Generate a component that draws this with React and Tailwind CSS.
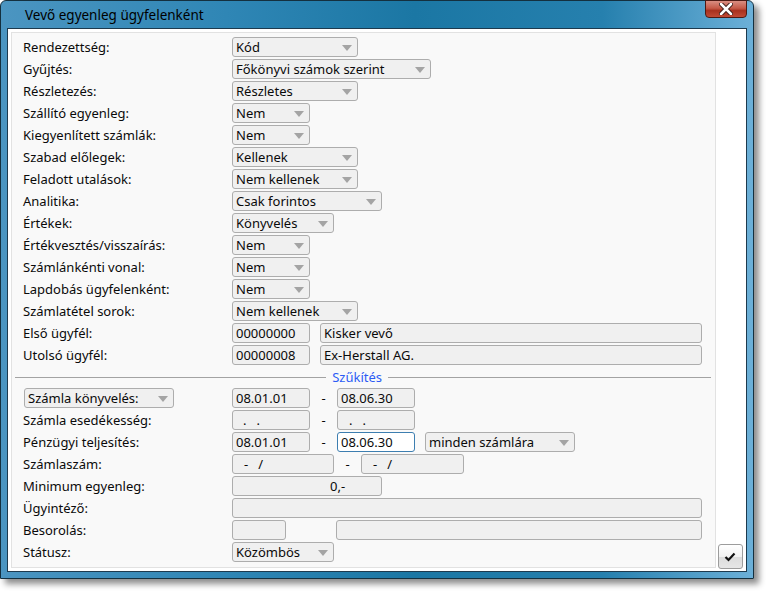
import React from 'react';

const upperRows = [
  ['Rendezettség:', 'Kód', 126],
  ['Gyűjtés:', 'Főkönyvi számok szerint', 199],
  ['Részletezés:', 'Részletes', 126],
  ['Szállító egyenleg:', 'Nem', 78],
  ['Kiegyenlített számlák:', 'Nem', 78],
  ['Szabad előlegek:', 'Kellenek', 126],
  ['Feladott utalások:', 'Nem kellenek', 126],
  ['Analitika:', 'Csak forintos', 150],
  ['Értékek:', 'Könyvelés', 102],
  ['Értékvesztés/visszaírás:', 'Nem', 78],
  ['Számlánkénti vonal:', 'Nem', 78],
  ['Lapdobás ügyfelenként:', 'Nem', 78],
  ['Számlatétel sorok:', 'Nem kellenek', 126],
];

const Arrow = () => (
  <svg width="10" height="6" viewBox="0 0 10 6" className="ml-auto mr-[5px] mt-[2px] shrink-0">
    <path d="M0 0 H10 L5 6 Z" fill="#a4a4a4" />
  </svg>
);

const Box = ({ w, children, arrow, focused, className = '' }) => (
  <div
    style={{ width: w }}
    className={`h-[20px] shrink-0 flex items-center rounded-[3px] border pl-[3px] whitespace-pre ${
      focused ? 'bg-white border-[#3d7eb0]' : 'bg-[#f0f0f0] border-[#adadad]'
    } ${className}`}
  >
    {children}
    {arrow && <Arrow />}
  </div>
);

const Row = ({ label, children }) => (
  <div className="flex items-center h-[20px] mb-[2px]">
    <div className="w-[209px] shrink-0">{label}</div>
    {children}
  </div>
);

const Dash = () => <div className="w-[27px] shrink-0 text-center">-</div>;

export default function App() {
  return (
    <div className="w-[766px] h-[591px] bg-white overflow-hidden text-[13px] text-[#0a0a0a] font-['Noto_Sans',sans-serif] leading-none">
      <div className="w-[754px] h-[579px] flex flex-col rounded-t-[6px] border border-[#14303f] bg-[linear-gradient(90deg,#4b95c1_0%,#2f86b5_30%,#1b77a4_55%,#2680ae_80%,#6cb0d8_100%)] shadow-[5px_5px_6px_rgba(0,0,0,0.45)]">
        <div className="h-[27px] shrink-0 flex items-start relative">
          <div className="pl-[24px] pt-[8px] text-[13.5px] text-black">Vevő egyenleg ügyfelenként</div>
          <div className="ml-auto mr-[6px] -mt-px w-[42px] h-[18px] rounded-b-[4px] border border-[#4d1a14] bg-[linear-gradient(180deg,#d98e82_0%,#c55a48_45%,#a8311f_60%,#c04a35_100%)] flex items-center justify-center">
            <svg width="14" height="12" viewBox="0 0 14 12">
              <path d="M2 1 L12 11 M12 1 L2 11" stroke="#3b1c18" strokeWidth="4.5" strokeLinecap="round" />
              <path d="M2 1 L12 11 M12 1 L2 11" stroke="#ffffff" strokeWidth="2.5" strokeLinecap="round" />
            </svg>
          </div>
        </div>
        <div className="flex-1 mx-[6px] mb-[6px] border border-[#1d3a4e] bg-white flex">
          <div className="w-[705px] ml-[3px] mt-[3px] mb-[3px] border border-[#e2e2e2] bg-[#f9f9f9] pt-[4px] pl-[11px]">
            {upperRows.map(([label, value, w]) => (
              <Row key={label} label={label}>
                <Box w={w} arrow>{value}</Box>
              </Row>
            ))}
            <Row label="Első ügyfél:">
              <Box w={78}>00000000</Box>
              <Box w={382} className="ml-[10px]">Kisker vevő</Box>
            </Row>
            <Row label="Utolsó ügyfél:">
              <Box w={78}>00000008</Box>
              <Box w={382} className="ml-[10px]">Ex-Herstall AG.</Box>
            </Row>

            <div className="flex items-center h-[21px] -ml-[8px] mr-[4px]">
              <div className="flex-1 h-px bg-[#a3a3a3]" />
              <div className="px-[6px] text-[#2c5cf5]">Szűkítés</div>
              <div className="w-[323px] h-px bg-[#a3a3a3]" />
            </div>

            <div className="flex items-center h-[20px] mb-[2px]">
              <div className="w-[209px] shrink-0">
                <Box w={150} arrow className="ml-px">Számla könyvelés:</Box>
              </div>
              <Box w={78}>08.01.01</Box>
              <Dash />
              <Box w={78}>08.06.30</Box>
            </div>
            <Row label="Számla esedékesség:">
              <Box w={78} className="pl-[10px]">.   .</Box>
              <Dash />
              <Box w={78} className="pl-[11px]">.   .</Box>
            </Row>
            <Row label="Pénzügyi teljesítés:">
              <Box w={78}>08.01.01</Box>
              <Dash />
              <Box w={78} focused>08.06.30</Box>
              <Box w={150} arrow className="ml-[10px]">minden számlára</Box>
            </Row>
            <Row label="Számlaszám:">
              <Box w={102} className="pl-[11px]">-   /</Box>
              <Dash />
              <Box w={103} className="pl-[11px]">-   /</Box>
            </Row>
            <Row label="Minimum egyenleg:">
              <Box w={150} className="pl-[97px]">0,-</Box>
            </Row>
            <Row label="Ügyintéző:">
              <Box w={470} />
            </Row>
            <Row label="Besorolás:">
              <Box w={54} />
              <Box w={366} className="ml-[50px]" />
            </Row>
            <Row label="Státusz:">
              <Box w={102} arrow>Közömbös</Box>
            </Row>
          </div>
          <div className="flex-1 flex items-end justify-center pb-[2px] pr-[2px]">
            <div className="w-[25px] h-[25px] rounded-[3px] border border-[#9c9c9c] bg-[linear-gradient(180deg,#ffffff_0%,#f2f2f2_50%,#dcdcdc_51%,#e6e6e6_100%)] flex items-center justify-center">
              <svg width="12" height="10" viewBox="0 0 12 10">
                <path d="M1.5 5 L4.5 8 L10.5 1.5" stroke="#111" strokeWidth="2.2" fill="none" />
              </svg>
            </div>
          </div>
        </div>
      </div>
    </div>
  );
}
